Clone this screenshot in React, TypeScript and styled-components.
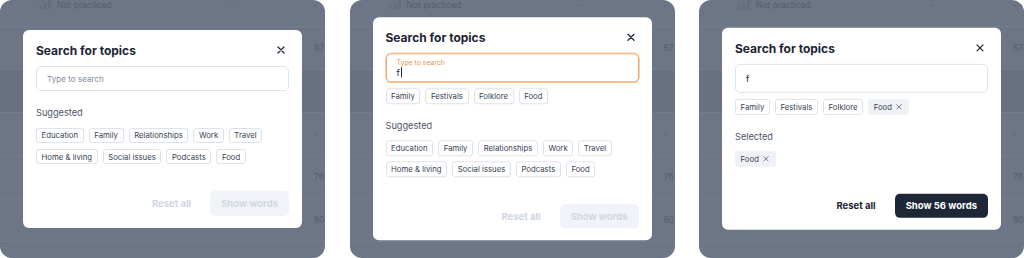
import React from 'react';
import styled, { createGlobalStyle } from 'styled-components';

const GlobalStyle = createGlobalStyle`
  html, body {
    margin: 0;
    padding: 0;
    background: #ffffff;
    font-family: Inter, "Liberation Sans", sans-serif;
  }
`;

const Page = styled.div`
  display: flex;
  justify-content: space-between;
  width: 1024px;
  height: 258px;
`;

const Panel = styled.div`
  position: relative;
  width: 325px;
  height: 258px;
  border-radius: 12px;
  overflow: hidden;
  background: #6c7686;
`;

const Table = styled.div`
  margin-top: -16px;
`;

const Row = styled.div<{ $dark?: boolean }>`
  display: grid;
  grid-template-columns: 39px 18px 173px 84px 1fr;
  align-items: center;
  height: 42px;
  border-bottom: 1px solid #737d8c;
  background: ${({ $dark }) => ($dark ? '#677181' : 'transparent')};
  color: #555f6f;
  font-size: 8.5px;
  white-space: nowrap;
`;

const Cell = styled.span<{ $col: number }>`
  grid-column: ${({ $col }) => $col};
`;

const Modal = styled.div`
  position: absolute;
  left: 23px;
  right: 23px;
  top: 50%;
  transform: translateY(-50%);
  background: #ffffff;
  border-radius: 6px;
  padding: 12px 13px;
`;

const Header = styled.div`
  display: flex;
  justify-content: space-between;
  align-items: center;
  height: 16px;
  margin-bottom: 8px;
`;

const Title = styled.h2`
  margin: 0;
  font-size: 12px;
  font-weight: 700;
  color: #1c2433;
`;

const CloseButton = styled.button`
  display: flex;
  align-items: center;
  justify-content: center;
  width: 12px;
  height: 12px;
  margin-right: 2px;
  padding: 0;
  border: none;
  background: none;
`;

const SearchField = styled.div<{ $tall?: boolean; $focused?: boolean }>`
  box-sizing: border-box;
  display: flex;
  flex-direction: column;
  justify-content: center;
  height: ${({ $tall }) => ($tall ? '29px' : '25px')};
  padding: 0 10px;
  border: 1px solid ${({ $focused }) => ($focused ? '#f6a565' : '#dce3ec')};
  box-shadow: ${({ $focused }) => ($focused ? '0 0 0 0.5px #f6a565' : 'none')};
  border-radius: 5px;
`;

const Placeholder = styled.span`
  font-size: 8.1px;
  color: #858e9d;
`;

const FloatLabel = styled.span`
  font-size: 6.9px;
  line-height: 9px;
  color: #f1944c;
`;

const Value = styled.span`
  display: flex;
  align-items: center;
  font-size: 9px;
  line-height: 11px;
  color: #1f2937;
`;

const Caret = styled.span`
  display: inline-block;
  width: 1px;
  height: 10px;
  margin-left: 1px;
  background: #1f2937;
`;

const ChipRow = styled.div<{ $spaced?: boolean }>`
  display: flex;
  flex-wrap: wrap;
  gap: 5.7px 5px;
  margin-top: ${({ $spaced }) => ($spaced ? '6px' : '0')};
`;

const Chip = styled.span<{ $selected?: boolean }>`
  box-sizing: border-box;
  display: inline-flex;
  align-items: center;
  gap: 4px;
  height: 15.5px;
  padding: 0 ${({ $selected }) => ($selected ? '6px' : '4.6px')} 0 4.6px;
  border: 1px solid ${({ $selected }) => ($selected ? '#eef2f7' : '#dde3eb')};
  border-radius: 3px;
  background: ${({ $selected }) => ($selected ? '#eef2f7' : '#ffffff')};
  font-size: 7.75px;
  color: #374151;
`;

const SectionLabel = styled.div`
  margin: 16.4px 0 8.3px;
  font-size: 9.2px;
  line-height: 12px;
  color: #4b5563;
`;

const Footer = styled.div`
  display: flex;
  justify-content: flex-end;
  align-items: center;
  gap: 19px;
  margin-top: 27px;
`;

const ResetButton = styled.button<{ $active?: boolean }>`
  padding: 0;
  border: none;
  background: none;
  font-family: inherit;
  font-size: 9.5px;
  font-weight: 700;
  color: ${({ $active }) => ($active ? '#1c2433' : '#cfd7e2')};
`;

const PrimaryButton = styled.button<{ $active?: boolean }>`
  height: 24.6px;
  padding: 0 11px;
  border: none;
  border-radius: 5px;
  background: ${({ $active }) => ($active ? '#1e2737' : '#f0f3f7')};
  font-family: inherit;
  font-size: 9.5px;
  font-weight: 700;
  color: ${({ $active }) => ($active ? '#ffffff' : '#d2d9e3')};
`;

const CloseIcon = () => (
  <svg width="8" height="8" viewBox="0 0 8 8">
    <path d="M1 1L7 7M7 1L1 7" stroke="#1f2937" strokeWidth="1.3" strokeLinecap="round" />
  </svg>
);

const SmallX = () => (
  <svg width="6" height="6" viewBox="0 0 6 6">
    <path d="M0.7 0.7L5.3 5.3M5.3 0.7L0.7 5.3" stroke="#6b7280" strokeWidth="0.9" strokeLinecap="round" />
  </svg>
);

const LevelIcon = () => (
  <svg width="12" height="9" viewBox="0 0 12 9">
    <rect x="0" y="5" width="3" height="4" rx="0.5" fill="#646e7e" />
    <rect x="4.5" y="2.5" width="3" height="6.5" rx="0.5" fill="#646e7e" />
    <rect x="9" y="0" width="3" height="9" rx="0.5" fill="#646e7e" />
  </svg>
);

const suggested = ['Education', 'Family', 'Relationships', 'Work', 'Travel', 'Home & living', 'Social issues', 'Podcasts', 'Food'];
const matches = ['Family', 'Festivals', 'Folklore'];

const Backdrop = () => (
  <Table>
    <Row>
      <Cell $col={2}><LevelIcon /></Cell>
      <Cell $col={3}>Not practiced</Cell>
      <Cell $col={4}>-</Cell>
      <Cell $col={5}>-</Cell>
    </Row>
    <Row><Cell $col={5}>67</Cell></Row>
    <Row $dark />
    <Row><Cell $col={5}>-</Cell></Row>
    <Row><Cell $col={5}>76</Cell></Row>
    <Row><Cell $col={5}>80</Cell></Row>
    <Row />
  </Table>
);

const ModalHeader = () => (
  <Header>
    <Title>Search for topics</Title>
    <CloseButton aria-label="Close"><CloseIcon /></CloseButton>
  </Header>
);

const SuggestedBlock = () => (
  <>
    <SectionLabel>Suggested</SectionLabel>
    <ChipRow>
      {suggested.map((t) => <Chip key={t}>{t}</Chip>)}
    </ChipRow>
  </>
);

const App: React.FC = () => (
  <>
    <GlobalStyle />
    <Page>
      <Panel>
        <Backdrop />
        <Modal>
          <ModalHeader />
          <SearchField>
            <Placeholder>Type to search</Placeholder>
          </SearchField>
          <SuggestedBlock />
          <Footer>
            <ResetButton>Reset all</ResetButton>
            <PrimaryButton>Show words</PrimaryButton>
          </Footer>
        </Modal>
      </Panel>

      <Panel>
        <Backdrop />
        <Modal>
          <ModalHeader />
          <SearchField $tall $focused>
            <FloatLabel>Type to search</FloatLabel>
            <Value>f<Caret /></Value>
          </SearchField>
          <ChipRow $spaced>
            {[...matches, 'Food'].map((t) => <Chip key={t}>{t}</Chip>)}
          </ChipRow>
          <SuggestedBlock />
          <Footer>
            <ResetButton>Reset all</ResetButton>
            <PrimaryButton>Show words</PrimaryButton>
          </Footer>
        </Modal>
      </Panel>

      <Panel>
        <Backdrop />
        <Modal>
          <ModalHeader />
          <SearchField $tall>
            <Value>f</Value>
          </SearchField>
          <ChipRow $spaced>
            {matches.map((t) => <Chip key={t}>{t}</Chip>)}
            <Chip $selected>Food <SmallX /></Chip>
          </ChipRow>
          <SectionLabel>Selected</SectionLabel>
          <ChipRow>
            <Chip $selected>Food <SmallX /></Chip>
          </ChipRow>
          <Footer>
            <ResetButton $active>Reset all</ResetButton>
            <PrimaryButton $active>Show 56 words</PrimaryButton>
          </Footer>
        </Modal>
      </Panel>
    </Page>
  </>
);

export default App;
